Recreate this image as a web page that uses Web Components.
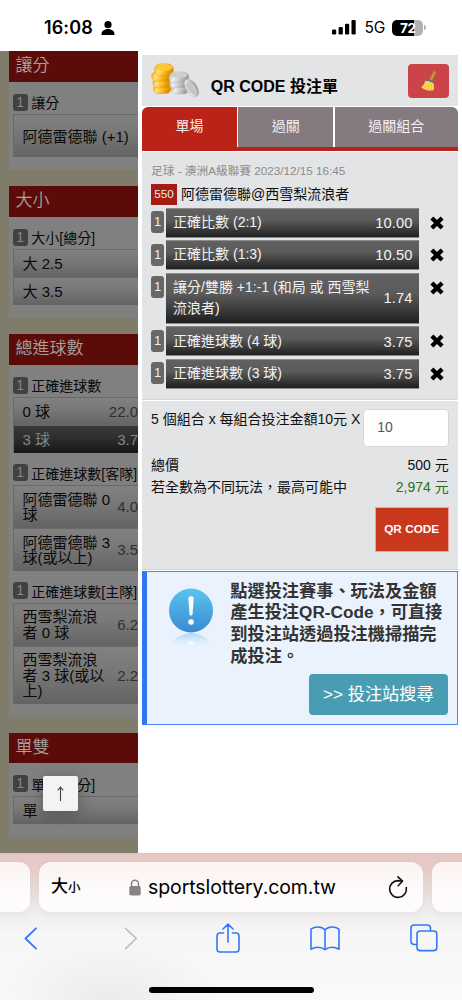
<!DOCTYPE html>
<html lang="zh-Hant">
<head>
<meta charset="utf-8">
<title>QR CODE 投注單</title>
<style>
html,body{margin:0;padding:0}
body{width:462px;height:1000px;overflow:hidden;background:#fff;font-family:"Liberation Sans","Noto Sans CJK TC",sans-serif;color:#111}
</style>
</head>
<body>
<phone-screen></phone-screen>
<script>
function define(name, html, setup) {
  const t = document.createElement('template');
  t.innerHTML = html;
  customElements.define(name, class extends HTMLElement {
    constructor() {
      super();
      this.attachShadow({mode: 'open'});
    }
    connectedCallback() {
      if (this.shadowRoot.childNodes.length) return;
      const c = t.content.cloneNode(true);
      if (setup) setup(this, c);
      this.shadowRoot.append(c);
    }
  });
}

define('status-bar', `
<style>
:host{display:flex;height:51px;box-sizing:border-box;padding:4px 36px 0 44px;align-items:center;background:#fff;font-family:Inter,sans-serif;color:#000}
.time{font-size:18px;font-weight:600;line-height:20px;letter-spacing:.1px;width:51px;white-space:nowrap}
.person{margin-left:6px}
.sig{margin-left:auto}
.net{font-size:15.500px;letter-spacing:-.1px;margin-left:8px;width:21px;white-space:nowrap}
.bat{margin-left:7px;display:flex;align-items:center}
.cell{width:31px;height:16px;border-radius:5px;background:linear-gradient(90deg,#000 72%,#b3b3b3 72%);color:#fff;font-size:13.5px;font-weight:700;line-height:16px;text-align:center;letter-spacing:-.3px}
.nub{width:1.6px;height:5px;margin-left:1px;border-radius:0 2px 2px 0;background:#b3b3b3}
svg{display:block}
</style>
<span class="time">16:08</span>
<svg class="person" width="14" height="14" viewBox="0 0 14 14"><circle cx="7" cy="3.700" r="3.600"/><path d="M.4 13.200C.4 10.300 3.200 8 7 8s6.600 2.300 6.600 5.200q0 .7-.8.7H1.200q-.8 0-.8-.7z"/></svg>
<svg class="sig" width="24" height="15" viewBox="0 0 24 15"><rect x="0" y="9.500" width="4.200" height="5" rx="1.200"/><rect x="6.600" y="7" width="4.200" height="7.500" rx="1.200"/><rect x="13" y="3.700" width="4.200" height="10.800" rx="1.200"/><rect x="19.500" y="0" width="4.200" height="14.500" rx="1.200"/></svg>
<span class="net">5G</span>
<span class="bat"><span class="cell">72</span><span class="nub"></span></span>
`);

define('bet-odd', `
<style>
:host{display:flex;box-sizing:border-box;width:125px;height:28px;align-items:center;padding:0 0 0 8.500px;justify-content:space-between;border:solid #696969;border-width:1.300px 0 0 1px;background:linear-gradient(#818181,#777 45%,#636363);color:#090909;font-size:15px;line-height:15.300px;white-space:nowrap}
:host([selected]){background:linear-gradient(#383838,#2e2e2e 45%,#161616);color:#858585}
.o{color:#303030;font-size:15px;flex:none}
:host([selected]) .o{color:#858585}
</style>
<span><slot></slot></span><span class="o"></span>
`, (el, c) => { c.querySelector('.o').textContent = el.getAttribute('odds') || ''; if (el.hasAttribute('h')) el.style.height = el.getAttribute('h') + 'px'; });

define('bet-group', `
<style>
:host{display:block;padding:12px 0 0 4.500px}
:host(.next){padding-top:11.300px}
.l{display:flex;height:17px;align-items:center;font-size:14px;color:#0a0a0a;white-space:nowrap;margin-bottom:3.500px}
i{font-style:normal;width:14.500px;height:17px;border-radius:3px;background:#414141;color:#888;font-size:14px;line-height:17px;text-align:center;margin-right:3.800px}
</style>
<div class="l"><i>1</i><span class="t"></span></div><slot></slot>
`, (el, c) => { c.querySelector('.t').textContent = el.getAttribute('label'); });

define('bet-section', `
<style>
:host{display:block;background:#808080;padding-bottom:12.800px;margin-bottom:16px}
h3{margin:0;height:30.700px;line-height:30px;padding-left:7px;background:#5c0c08;color:#a9a09f;font-size:17px;font-weight:350;white-space:nowrap}
</style>
<h3></h3><slot></slot>
`, (el, c) => { c.querySelector('h3').textContent = el.getAttribute('heading'); });

define('bet-board', `
<style>
:host{display:block;position:relative;width:138px;height:802px;box-sizing:border-box;padding-left:8.500px;overflow:hidden;background:#7f7c6b}
.top{position:absolute;left:43px;top:725px;width:35px;height:35px;border-radius:2px;background:#f3f3f3;box-shadow:0 3px 14px rgba(0,0,0,.28);display:flex;align-items:center;justify-content:center}
.last{height:10px;background:#8b2c29}
</style>
<bet-section heading="讓分"><bet-group label="讓分"><bet-odd h="43">阿德雷德聯 (+1)</bet-odd></bet-group></bet-section>
<bet-section heading="大小"><bet-group label="大小[總分]"><bet-odd>大 2.5</bet-odd><bet-odd>大 3.5</bet-odd></bet-group></bet-section>
<bet-section heading="總進球數">
<bet-group label="正確進球數"><bet-odd odds="22.0">0 球</bet-odd><bet-odd selected odds="3.7">3 球</bet-odd></bet-group>
<bet-group class="next" label="正確進球數[客隊]"><bet-odd h="43" odds="4.0">阿德雷德聯 0<br>球</bet-odd><bet-odd h="43" odds="3.5">阿德雷德聯 3<br>球(或以上)</bet-odd></bet-group>
<bet-group class="next" label="正確進球數[主隊]"><bet-odd h="43" odds="6.2">西雪梨流浪<br>者 0 球</bet-odd><bet-odd h="58" odds="2.2">西雪梨流浪<br>者 3 球(或以<br>上)</bet-odd></bet-group>
</bet-section>
<bet-section heading="單雙"><bet-group label="單雙[總分]"><bet-odd>單</bet-odd></bet-group></bet-section>
<div class="last"></div>
<div class="top"><svg width="9" height="17" viewBox="0 0 9 17" fill="none" stroke="#444" stroke-width="1.100"><path d="M4.500 16V2M1.800 5.300L4.500 2l2.700 3.300"/></svg></div>
`);

define('coin-icon', `
<style>:host{display:block;width:49px;height:35px}svg{display:block}</style>
<svg width="49" height="35" viewBox="0 0 49 35">
<defs>
<linearGradient id="g" x2="1" y2=".3"><stop stop-color="#f5a200"/><stop offset=".35" stop-color="#ffe07a"/><stop offset=".7" stop-color="#f9b414"/><stop offset="1" stop-color="#d88a00"/></linearGradient>
<linearGradient id="s" x2="1" y2=".3"><stop stop-color="#a9a9a9"/><stop offset=".35" stop-color="#eee"/><stop offset=".7" stop-color="#c4c4c4"/><stop offset="1" stop-color="#999"/></linearGradient>
</defs>
<g fill="url(#g)" stroke="#e59a0a" stroke-width=".5"><rect x="2.500" y="21" width="17.500" height="9.500" rx="4.700"/><rect x="1.800" y="15" width="18" height="10" rx="5"/><rect x=".7" y="8.500" width="19" height="10" rx="5"/><rect x="3.500" y=".8" width="19" height="12" rx="6"/></g>
<ellipse cx="13.500" cy="4.500" rx="8" ry="3.200" fill="#ffc934"/>
<g fill="url(#s)" stroke="#b5b5b5" stroke-width=".4"><rect x="20.500" y="22" width="17" height="9" rx="4.500"/><rect x="18.500" y="15.500" width="18" height="9.500" rx="4.700"/><rect x="18" y="9" width="20" height="11" rx="5.500"/><ellipse cx="40.500" cy="25" rx="5.600" ry="10" transform="rotate(-34 40.500 25)"/></g>
<ellipse cx="28" cy="12" rx="8.300" ry="2.800" fill="#cfcfcf"/>
<ellipse cx="40.800" cy="25.300" rx="3.800" ry="8" transform="rotate(-34 40.800 25.300)" fill="#c6c6c6"/>
</svg>`);

define('slip-header', `
<style>
:host{display:flex;height:51px;box-sizing:border-box;background:#e3e4e6;padding:8px 8.500px 0 9px;align-items:flex-start}
h1{margin:12px 0 0 10.500px;font-size:16px;line-height:24px;font-weight:700;color:#000;white-space:nowrap}
.b{margin-left:auto;margin-top:.5px;width:41px;height:34px;border-radius:4px;background:#cb444a;display:flex;align-items:center;justify-content:center}
</style>
<coin-icon></coin-icon><h1>QR CODE 投注單</h1>
<div class="b"><svg width="18" height="22" viewBox="0 0 18 22"><path d="M9 10L13.300 1.700q.9-1.300 2-.7 1.200.7.7 2L12 11z" fill="#c99634" stroke="#8f661f" stroke-width=".5"/><path d="M5.500 10.500q3-1.500 7.500 1.500 1.800 4 .8 8.300Q6 21.500 1.300 17.500q3.200-3 4.200-7z" fill="#f7d84e"/><path d="M6.500 13Q6 16.500 3.800 18.500M9 13.500q0 4-1.500 6.500M11.300 14q.6 3.500.2 6" stroke="#dcb53a" stroke-width=".6" fill="none"/><path d="M6 9.400q4-1 7.300 1.900l-.5 1.700Q9 10.400 5.500 11.200z" fill="#6b6b86"/></svg></div>
`);

define('slip-tabs', `
<style>
:host{display:grid;grid-template-columns:94.500px 94.500px 1fr;column-gap:1.700px;height:43.500px;box-sizing:border-box;margin-top:1px;border-bottom:4px solid #b92318;background:#fff;border-radius:6px 6px 0 0;overflow:hidden}
span{display:flex;align-items:center;justify-content:center;background:#847a80;color:#f4f0f2;font-size:14px;padding-bottom:3px}
.on{background:#b92318}
</style>
<span class="on">單場</span><span>過關</span><span>過關組合</span>
`);

define('slip-row', `
<style>
:host{display:flex;align-items:flex-start;height:30px;margin-bottom:2.400px}
i{font-style:normal;width:13px;height:22px;margin-top:3.500px;border-radius:3px;background:#676767;color:#eee;font-size:13px;line-height:21px;text-align:center}
.r{margin-left:2px;width:253px;height:100%;box-sizing:border-box;border:1px solid #8b8b8b;border-width:1px 0;background:linear-gradient(#616161,#5b5b5b 40%,#1f1f1f);color:#f2f2f2;padding:0 6.500px 0 7px;display:flex;align-items:center;justify-content:space-between;font-size:14px;line-height:21.700px;white-space:nowrap}
.o{font-size:14.700px;letter-spacing:.12px;padding-top:2px}
svg{margin:8px 0 0 10.500px}
</style>
<i>1</i><div class="r"><span><slot></slot></span><span class="o"></span></div>
<svg width="14" height="14" viewBox="0 0 14 14" stroke="#000" stroke-width="4.300" stroke-linejoin="round"><path d="M1.900 1.900L12.100 12.100M12.100 1.900L1.900 12.100"/></svg>
`, (el, c) => { c.querySelector('.o').textContent = el.getAttribute('odds'); if (el.hasAttribute('h')) el.style.height = el.getAttribute('h') + 'px'; });

define('slip-match', `
<style>
:host{display:block;height:248px;box-sizing:border-box;background:#e3e4e6;margin-top:1px;padding:10px 0 0 8.800px;border-bottom:1px solid #d6d7d9}
.m{font-size:11.700px;line-height:18px;color:#8b8b8b;white-space:nowrap}
.n{display:flex;height:21px;margin:4px 0 3.300px;align-items:center;font-size:14px;color:#0c0c0c;white-space:nowrap}
.n span{padding-bottom:3px}
b{font-weight:400;width:26px;height:21px;background:#a41d13;color:#eee;font-size:11.700px;line-height:20px;text-align:center;margin-right:4px}
</style>
<div class="m">足球 - 澳洲A級聯賽 2023/12/15 16:45</div>
<div class="n"><b>550</b><span>阿德雷德聯@西雪梨流浪者</span></div>
<slip-row odds="10.00">正確比數 (2:1)</slip-row>
<slip-row odds="10.50">正確比數 (1:3)</slip-row>
<slip-row odds="1.74" h="51.500">讓分/雙勝 +1:-1 (和局 或 西雪梨<br>流浪者)</slip-row>
<slip-row odds="3.75">正確進球數 (4 球)</slip-row>
<slip-row odds="3.75">正確進球數 (3 球)</slip-row>
`);

define('slip-total', `
<style>
:host{display:block;height:169px;box-sizing:border-box;background:#e3e4e6;margin-top:1px;padding:8.500px 9px 0 8.800px;font-size:14px;line-height:21.500px;color:#111;border-bottom:1px solid #d0d1d3}
.l{display:flex;justify-content:space-between;white-space:nowrap}
.a{height:46px}
.in{width:84px;height:36px;box-sizing:content-box;border:1px solid #d3d8dd;border-radius:4px;background:#fff;color:#50565c;text-indent:13px;line-height:35px;font-size:14px;margin-right:-.5px}
.g{color:#2b6f1e}
.q{width:72px;height:43px;border:1px solid #eaa69a;background:#c9371d;color:#fff;font-size:11.800px;font-weight:700;line-height:42px;text-align:center;margin:8.500px 0 0 auto}
</style>
<div class="l a"><span>5 個組合 x 每組合投注金額10元 X</span><span class="in">10</span></div>
<div class="l"><span>總價</span><span>500 元</span></div>
<div class="l"><span>若全數為不同玩法，最高可能中</span><span class="g">2,974 元</span></div>
<div class="q">QR CODE</div>
`);

define('info-box', `
<style>
:host{display:flex;height:153.500px;box-sizing:border-box;margin-top:1.500px;border:1px solid #4a86f0;border-left:5.500px solid #2f77f1;background:#eaf3fd;padding:8.500px 9px 0 21.500px}
svg{display:block;margin-top:7px;flex:none}
.t{margin-left:16.500px;font-size:17.200px;line-height:21.700px;font-weight:700;color:#333;white-space:nowrap;display:flex;flex-direction:column}
.p{height:87px}
.s{margin:6.500px 0 0 78.500px;width:139px;height:41px;border-radius:4px;background:#499db3;color:#fff;font-size:17.200px;font-weight:400;line-height:40px;text-align:center}
</style>
<svg width="45" height="62" viewBox="0 0 45 62"><defs><linearGradient id="b" x2="0" y2="1"><stop stop-color="#5bc4ef"/><stop offset="1" stop-color="#3a8ad3"/></linearGradient><linearGradient id="r" x2="0" y2="1"><stop stop-color="#9dcdf0" stop-opacity=".75"/><stop offset="1" stop-color="#cfe8fa" stop-opacity="0"/></linearGradient></defs>
<circle cx="22" cy="22.500" r="22" fill="url(#b)"/><path d="M19.300 10q0-1.800 2.700-1.800t2.700 1.800l-1.200 16.500q-.2 1-1.500 1t-1.500-1z" fill="#fff"/><circle cx="22" cy="34" r="2.800" fill="#fff"/><path d="M2 59Q4 46.500 22 45q18 1.500 20 14z" fill="url(#r)"/><ellipse cx="22" cy="55" rx="3" ry="2" fill="#fff" opacity=".7"/></svg>
<div class="t"><div class="p">點選投注賽事、玩法及金額<br>產生投注QR-Code，可直接<br>到投注站透過投注機掃描完<br>成投注。</div><div class="s">&gt;&gt; 投注站搜尋</div></div>
`);

define('bet-slip', `
<style>:host{display:block;box-sizing:border-box;width:324px;height:802px;padding:4px 4.300px 0 4.300px;background:#fff}</style>
<slip-header></slip-header><slip-tabs></slip-tabs><slip-match></slip-match><slip-total></slip-total><info-box></info-box>
`);

define('safari-bar', `
<style>
:host{display:block;height:147px;box-sizing:border-box;padding-top:8px;border-top:1px solid #d5c4c4;background:radial-gradient(ellipse 120px 60px at 110px 147px,rgba(225,225,225,.6),transparent),linear-gradient(#e7c7c5,#e7cbca 12px,#ebe1df 40px,#efeeed 58px,#f7f6f6 80px,#fafafa);color:#000;font-family:Inter,"Noto Sans CJK TC",sans-serif}
.u{display:grid;grid-template-columns:30px 384px 30px;column-gap:9px;height:50px}
.u>div{background:linear-gradient(#fbf3f2,#fdfbfb 60%);box-shadow:0 2px 8px rgba(90,70,70,.07)}
.x{border-radius:0 11px 11px 0}.y{border-radius:11px 0 0 11px}
.p{border-radius:12px;display:flex;align-items:center;padding:0 15px 0 12px;box-sizing:border-box}
.aa{font-size:17px;font-weight:500;line-height:24px;white-space:nowrap;width:31px}
.aa small{font-size:12.500px}
.lock{margin-left:47px}
.url{font-size:19.500px;letter-spacing:-.08px;margin-left:7px;white-space:nowrap}
.re{margin-left:auto}
.k{display:flex;height:36px;margin:8px 24px 0 24px;align-items:center;justify-content:space-between}
.h{width:165px;height:5.500px;border-radius:3px;background:#000;margin:31px auto 0}
svg{display:block;flex:none}
</style>
<div class="u"><div class="x"></div><div class="p"><span class="aa">大<small>小</small></span>
<svg class="lock" width="12" height="17" viewBox="0 0 12 17"><rect x=".3" y="7" width="11.400" height="9.500" rx="1.700" fill="#858387"/><path d="M2.500 8V5a3.500 3.800 0 0 1 7 0v3" fill="none" stroke="#858387" stroke-width="1.500"/></svg>
<span class="url">sportslottery.com.tw</span>
<svg class="re" width="20" height="23" viewBox="0 0 20 23" fill="none" stroke="#111" stroke-width="1.600" stroke-linecap="round" stroke-linejoin="round"><path d="M18.300 11.500A8.400 8.400 0 1 1 9.800 4.600q2 0 4.300.6"/><path d="M10 .9L14.500 5.200 10.200 9.700"/></svg>
</div><div class="y"></div></div>
<div class="k">
<svg width="14" height="23" viewBox="0 0 14 23" fill="none" stroke="#3478f6" stroke-width="1.800" stroke-linecap="round" stroke-linejoin="round"><path d="M12 1.300L1.500 11.500 12 21.700"/></svg>
<svg width="14" height="23" viewBox="0 0 14 23" fill="none" stroke="#bdbdbd" stroke-width="1.600" stroke-linecap="round" stroke-linejoin="round" style="margin-left:16px"><path d="M1.500 1.300L12.300 11.500 1.500 21.700"/></svg>
<svg width="24" height="30" viewBox="0 0 24 30" fill="none" stroke="#3478f6" stroke-width="1.600" stroke-linecap="round" stroke-linejoin="round" style="margin-left:8px"><path d="M7.500 10H4q-3 0-3 3v13q0 3 3 3h16q3 0 3-3V13q0-3-3-3h-3.500M12 19V1.200M7 6l5-4.900L17 6"/></svg>
<svg width="30" height="25" viewBox="0 0 30 25" fill="none" stroke="#3478f6" stroke-width="1.600" stroke-linejoin="round"><path d="M15 3.800Q12.200 1 8 1T1 3.200V23.200Q4 21.300 8 21.300t7 2.400q3-2.400 7-2.400t7 1.900V3.200Q26.200 1 22 1T15 3.800zV23.500"/></svg>
<svg width="28" height="28" viewBox="0 0 28 28" fill="none" stroke="#3478f6" stroke-width="1.600"><path d="M7 20.500H4.200q-3.200 0-3.200-3.200V4.200Q1 1 4.200 1h13.100q3.200 0 3.200 3.200V7"/><rect x="7" y="7" width="19.800" height="19.600" rx="3.200"/></svg>
</div>
<div class="h"></div>
`);

define('phone-screen', `
<style>
:host{display:flex;flex-direction:column;width:462px;height:1000px;overflow:hidden}
main{display:grid;grid-template-columns:138px 324px;height:802px}
</style>
<status-bar></status-bar>
<main><bet-board></bet-board><bet-slip></bet-slip></main>
<safari-bar></safari-bar>
`);
</script>
</body>
</html>
